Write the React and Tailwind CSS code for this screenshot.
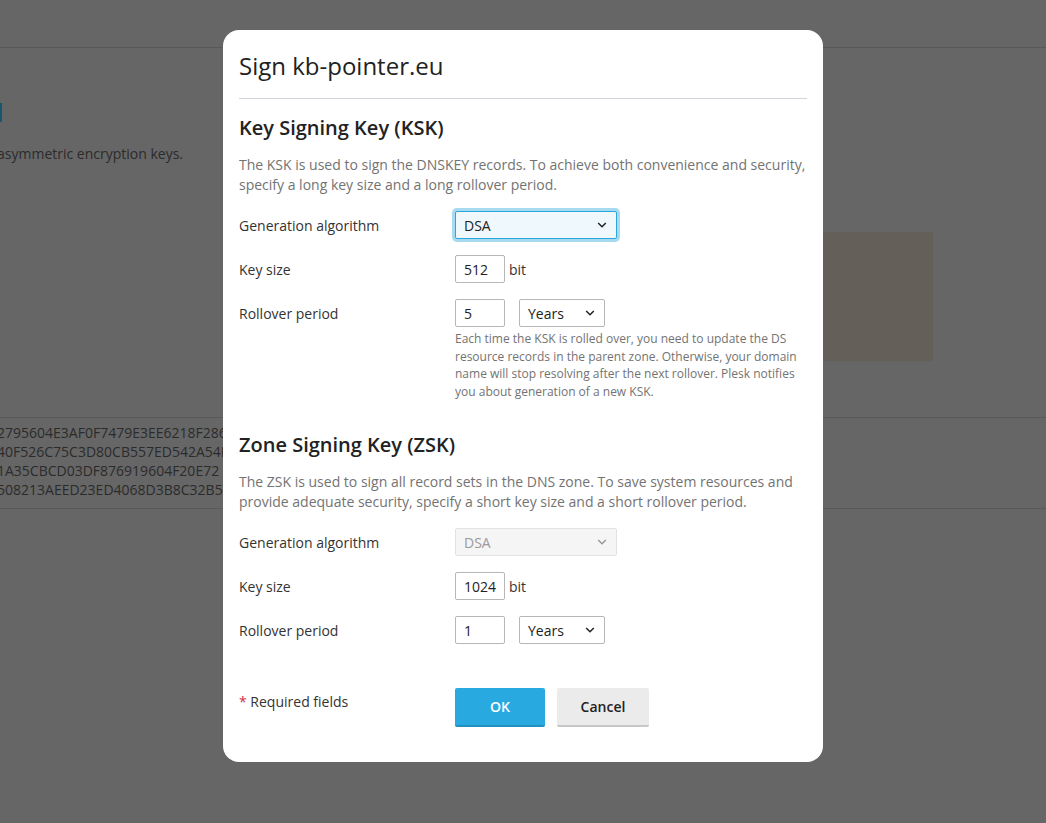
const Chevron = ({ color = "#222" }) => (
  <svg width="10" height="6" viewBox="0 0 10 6" className="shrink-0">
    <polyline points="1.2,1 5,4.8 8.8,1" fill="none" stroke={color} strokeWidth="1.5" />
  </svg>
)

const Select = ({ value, width, focused, disabled }) => {
  let cls = "border-[#b7b7b7] bg-white text-[#222]"
  if (focused) cls = "border-[#2ba6de] bg-[#eef8fd] text-[#222] ring-[3px] ring-[#a6daf1]"
  if (disabled) cls = "border-[#e2e2e2] bg-[#f5f5f5] text-[#9a9a9a]"
  return (
    <div className={`flex h-[28px] items-center justify-between rounded-[2px] border pl-2 pr-[9px] text-[14px] ${cls} ${width}`}>
      <span>{value}</span>
      <Chevron color={disabled ? "#9a9a9a" : "#222"} />
    </div>
  )
}

const Input = ({ value }) => (
  <div className="flex h-[28px] w-[50px] items-center rounded-[2px] border border-[#b7b7b7] bg-white pl-2 text-[14px] text-[#222]">
    {value}
  </div>
)

const Row = ({ label, children }) => (
  <div className="flex items-start">
    <div className="flex h-[28px] w-[216px] shrink-0 items-center text-[14px] text-[#333]">{label}</div>
    <div className="flex-1">{children}</div>
  </div>
)

const Section = ({ title, desc, algo, size, period, focused, disabled, hint }) => (
  <div>
    <h2 className="text-[20px] font-semibold leading-[28px] text-[#222]">{title}</h2>
    <p className="mt-[13px] text-[14px] leading-[20px] text-[#737373]">{desc}</p>
    <div className="mt-4 flex flex-col gap-4">
      <Row label="Generation algorithm">
        <Select value={algo} width="w-[162px]" focused={focused} disabled={disabled} />
      </Row>
      <Row label="Key size">
        <div className="flex items-center gap-1 text-[14px] text-[#333]">
          <Input value={size} />
          <span>bit</span>
        </div>
      </Row>
      <Row label="Rollover period">
        <div className="flex items-center gap-[14px]">
          <Input value={period} />
          <Select value="Years" width="w-[86px]" />
        </div>
        {hint && (
          <p className="mt-[3px] text-[12px] leading-[17.5px] text-[#737373]">{hint}</p>
        )}
      </Row>
    </div>
  </div>
)

const hexRows = [
  "2795604E3AF0F7479E3EE6218F286",
  "40F526C75C3D80CB557ED542A54F",
  "1A35CBCD03DF876919604F20E72",
  "508213AEED23ED4068D3B8C32B5",
]

export default function App() {
  return (
    <div className="relative h-[823px] w-[1046px] overflow-hidden bg-[#666] font-['Open_Sans',sans-serif]">
      {/* page behind the dimmed overlay */}
      <div className="h-[48px] border-b border-[#595959]" />
      <div className="mt-[55px] h-[19px] w-[2px] bg-[#17566b]" />
      <p className="mt-[22px] -ml-[3px] text-[14px] leading-[20px] text-[#2b2b2b]">asymmetric encryption keys.</p>
      <div className="ml-[823px] mt-[68px] h-[129px] w-[110px] bg-[#655f59]" />
      <div className="mt-[56px] border-y border-[#595959] pb-[9px] pt-[5px]">
        {hexRows.map((h) => (
          <div key={h} className="-ml-[3px] h-[19px] w-[226px] overflow-hidden whitespace-nowrap text-[14px] leading-[19px] text-[#2b2b2b]">
            {h}
          </div>
        ))}
      </div>

      {/* dialog */}
      <div className="absolute left-[223px] top-[30px] w-[600px] rounded-2xl bg-white px-4 pb-[35px] pt-[20px]">
        <h1 className="border-b border-[#d3d3dc] pb-4 text-[24px] leading-[32px] text-[#222]">Sign kb-pointer.eu</h1>
        <div className="mt-[15px]">
          <Section
            title="Key Signing Key (KSK)"
            desc="The KSK is used to sign the DNSKEY records. To achieve both convenience and security, specify a long key size and a long rollover period."
            algo="DSA"
            size="512"
            period="5"
            focused
            hint="Each time the KSK is rolled over, you need to update the DS resource records in the parent zone. Otherwise, your domain name will stop resolving after the next rollover. Plesk notifies you about generation of a new KSK."
          />
        </div>
        <div className="mt-[31px]">
          <Section
            title="Zone Signing Key (ZSK)"
            desc="The ZSK is used to sign all record sets in the DNS zone. To save system resources and provide adequate security, specify a short key size and a short rollover period."
            algo="DSA"
            size="1024"
            period="1"
            disabled
          />
        </div>
        <div className="mt-[44px] flex items-start">
          <div className="w-[216px] pt-[4px] text-[14px] leading-[20px] text-[#333]">
            <span className="text-[#d02d4b]">*</span> Required fields
          </div>
          <div className="flex gap-3">
            <button className="h-[39px] w-[90px] rounded-[2px] border-b-2 border-[#2290c0] bg-[#28aae1] text-[14px] font-semibold text-white">
              OK
            </button>
            <button className="h-[39px] w-[92px] rounded-[2px] border-b-2 border-[#c7c7c7] bg-[#ebebeb] text-[14px] font-semibold text-[#222]">
              Cancel
            </button>
          </div>
        </div>
      </div>
    </div>
  )
}
